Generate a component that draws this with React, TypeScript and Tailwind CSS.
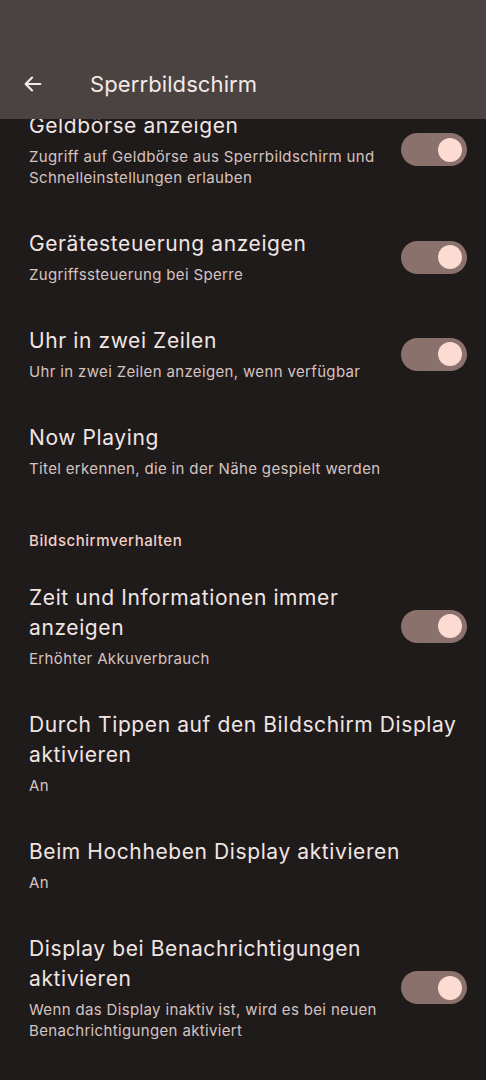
import type { ReactNode } from "react";

type Item = {
  title: ReactNode;
  subtitle: ReactNode;
  toggle?: boolean;
};

const lockItems: Item[] = [
  {
    title: "Geldbörse anzeigen",
    subtitle: "Zugriff auf Geldbörse aus Sperrbildschirm und Schnelleinstellungen erlauben",
    toggle: true,
  },
  { title: "Gerätesteuerung anzeigen", subtitle: "Zugriffssteuerung bei Sperre", toggle: true },
  { title: "Uhr in zwei Zeilen", subtitle: "Uhr in zwei Zeilen anzeigen, wenn verfügbar", toggle: true },
  { title: "Now Playing", subtitle: "Titel erkennen, die in der Nähe gespielt werden" },
];

const displayItems: Item[] = [
  { title: "Zeit und Informationen immer anzeigen", subtitle: "Erhöhter Akkuverbrauch", toggle: true },
  { title: "Durch Tippen auf den Bildschirm Display aktivieren", subtitle: "An" },
  { title: "Beim Hochheben Display aktivieren", subtitle: "An" },
  {
    title: "Display bei Benachrichtigungen aktivieren",
    subtitle: "Wenn das Display inaktiv ist, wird es bei neuen Benachrichtigungen aktiviert",
    toggle: true,
  },
];

const Toggle = () => (
  <div className="w-[66px] h-[33px] shrink-0 rounded-full bg-[#8b716c] flex items-center justify-end pr-[5px]">
    <div className="w-[24px] h-[24px] rounded-full bg-[#fcdbd3]" />
  </div>
);

const Row = ({ item, first }: { item: Item; first?: boolean }) => (
  <div className={`flex items-center pl-[29px] pr-[19px] pt-[20px] pb-[21px] ${first ? "-mt-[28px]" : ""}`}>
    <div className={`flex-1 min-w-0 ${item.toggle ? "pr-[22px]" : ""}`}>
      <div className="text-[21px] leading-[30px] tracking-[0.6px] text-[#f0e5e3]">{item.title}</div>
      <div className="mt-[5px] text-[15px] leading-[21px] tracking-[0.35px] text-[#d5c3c0]">{item.subtitle}</div>
    </div>
    {item.toggle && <Toggle />}
  </div>
);

export default function App() {
  return (
    <div className="w-[486px] h-[1080px] bg-[#201b1b] flex flex-col overflow-hidden font-['Inter',sans-serif]">
      <div className="h-[119px] shrink-0 bg-[#4a4342] flex items-end pb-[20px] relative z-10">
        <div className="flex items-center h-[30px]">
          <svg
            width="22"
            height="22"
            viewBox="0 0 24 24"
            className="ml-[22px]"
            fill="none"
            stroke="#f3e9e7"
            strokeWidth="2.4"
            strokeLinecap="round"
            strokeLinejoin="round"
          >
            <path d="M20 12H4.5M11 5l-7 7 7 7" />
          </svg>
          <span className="ml-[46px] text-[22px] tracking-[0.1px] text-[#f3e9e7]">Sperrbildschirm</span>
        </div>
      </div>
      <div className="flex-1 overflow-hidden">
        {lockItems.map((item, i) => (
          <Row key={i} item={item} first={i === 0} />
        ))}
        <div className="pl-[29px] pt-[31px] pb-[12px] text-[15px] leading-[20px] tracking-[0.55px] font-medium text-[#f1d0c9]">
          Bildschirmverhalten
        </div>
        {displayItems.map((item, i) => (
          <Row key={i} item={item} />
        ))}
      </div>
    </div>
  );
}
